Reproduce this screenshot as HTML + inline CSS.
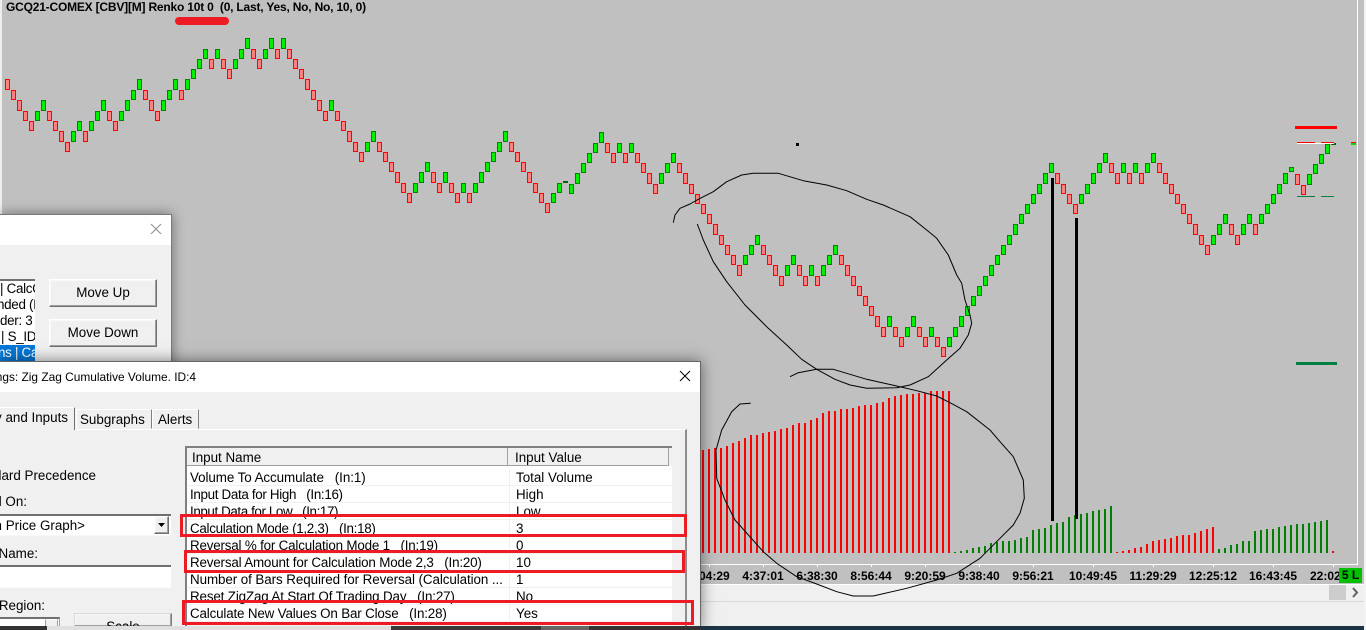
<!DOCTYPE html>
<html lang="en"><head><meta charset="utf-8"><title>Renko chart</title>
<style>
html,body{margin:0;padding:0;width:1366px;height:630px;overflow:hidden;background:#c0c0c0}
body{position:relative;font-family:"Liberation Sans",Arial,sans-serif;font-size:13.4px;color:#000}
div,span{position:absolute;white-space:pre;box-sizing:border-box}
svg{position:absolute;left:0;top:0}
.ax{font-weight:bold;font-size:12px;top:569px;width:70px;text-align:center;line-height:14px}
.tick{top:564px;width:1px;height:3px;background:#fff}
.btn{background:#f0f0f0;border:1px solid;border-color:#fff #707070 #707070 #fff;box-shadow:inset -1px -1px 0 #a0a0a0,inset 1px 1px 0 #f8f8f8;text-align:center}
.t{line-height:16px;height:16px;overflow:hidden}
.e{left:0;direction:rtl;text-align:right}
.r{left:187px;width:485px;height:17px;background:#fff;border-bottom:1px solid #f0f0f0;overflow:hidden}
.r span{top:1px;line-height:16px}
.r .a{left:3px}.r .b{left:329px}
.r i{position:absolute;left:322px;top:0;width:1px;height:17px;background:#f0f0f0}
.lr{left:0;width:35px;height:16px;line-height:16px;overflow:hidden;letter-spacing:-.3px}
</style></head><body>

<div style="left:0;top:0;width:2px;height:630px;background:#eee"></div>
<div style="left:6px;top:0;font-weight:bold;font-size:12px;line-height:15px;letter-spacing:-.2px">GCQ21-COMEX [CBV][M] Renko 10t 0  (0, Last, Yes, No, No, 10, 0)</div>
<div style="left:175px;top:17px;width:54px;height:8px;border-radius:4px;background:#ed1c24"></div>

<div style="left:2px;top:564px;width:1355px;height:1px;background:#fff"></div>
<div style="left:1357px;top:0;width:1px;height:565px;background:#fff"></div>
<div class="tick" style="left:709px"></div><div class="tick" style="left:763px"></div><div class="tick" style="left:817px"></div><div class="tick" style="left:871px"></div><div class="tick" style="left:925px"></div><div class="tick" style="left:979px"></div><div class="tick" style="left:1033px"></div><div class="tick" style="left:1093px"></div><div class="tick" style="left:1153px"></div><div class="tick" style="left:1213px"></div><div class="tick" style="left:1273px"></div><div class="tick" style="left:1333px"></div>
<div class="ax" style="left:674px">2:04:29</div>
<div class="ax" style="left:728px">4:37:01</div>
<div class="ax" style="left:782px">6:38:30</div>
<div class="ax" style="left:836px">8:56:44</div>
<div class="ax" style="left:890px">9:20:59</div>
<div class="ax" style="left:944px">9:38:40</div>
<div class="ax" style="left:998px">9:56:21</div>
<div class="ax" style="left:1058px">10:49:45</div>
<div class="ax" style="left:1118px">11:29:29</div>
<div class="ax" style="left:1178px">12:25:12</div>
<div class="ax" style="left:1238px">16:43:45</div>
<div class="ax" style="left:1298px;width:41px;overflow:hidden;text-align:left;text-indent:12px">22:02:15</div>
<div style="left:1339px;top:568px;width:23px;height:15px;background:#00c000;font-weight:bold;font-size:12px;line-height:15px;text-align:center">5 L</div>

<div style="left:0;top:584px;width:1364px;height:42px;background:#f0f0f0;border-top:1px solid #fff"></div>
<div style="left:0;top:601px;width:1364px;height:1px;background:#d8d8d8"></div>
<div style="left:1329px;top:585px;width:17px;height:15px;background:#cdcdcd"></div>
<div style="left:1364px;top:0;width:2px;height:630px;background:#f4f4f4"></div>

<svg width="1366" height="630" viewBox="0 0 1366 630">
<g transform="translate(.5 .5)" stroke-width="1">
<path fill="#ff8080" stroke="#f00" d="M5 79v10h4v-10zM11 90v9h4v-9zM17 100v10h4v-10zM23 111v9h4v-9zM29 121v9h4v-9zM47 111v9h4v-9zM53 121v9h4v-9zM59 131v10h4v-10zM65 142v9h4v-9zM83 131v10h4v-10zM107 111v9h4v-9zM113 121v9h4v-9zM143 90v9h4v-9zM149 100v10h4v-10zM155 111v9h4v-9zM179 90v9h4v-9zM209 59v9h4v-9zM221 59v9h4v-9zM227 69v9h4v-9zM251 49v9h4v-9zM257 59v9h4v-9zM275 49v9h4v-9zM287 49v9h4v-9zM293 59v9h4v-9zM299 69v9h4v-9zM305 79v10h4v-10zM311 90v9h4v-9zM317 100v10h4v-10zM323 111v9h4v-9zM335 111v9h4v-9zM341 121v9h4v-9zM347 131v10h4v-10zM353 142v9h4v-9zM359 152v9h4v-9zM377 142v9h4v-9zM383 152v9h4v-9zM389 162v9h4v-9zM395 172v10h4v-10zM401 183v9h4v-9zM407 193v9h4v-9zM431 172v10h4v-10zM437 183v9h4v-9zM449 183v9h4v-9zM455 193v9h4v-9zM467 193v9h4v-9zM509 142v9h4v-9zM515 152v9h4v-9zM521 162v9h4v-9zM527 172v10h4v-10zM533 183v9h4v-9zM539 193v9h4v-9zM545 203v9h4v-9zM605 143v9h4v-9zM611 153v9h4v-9zM623 153v9h4v-9zM635 153v9h4v-9zM641 163v9h4v-9zM647 173v10h4v-10zM653 184v9h4v-9zM677 163v9h4v-9zM683 173v10h4v-10zM689 184v9h4v-9zM695 194v9h4v-9zM701 204v9h4v-9zM707 214v9h4v-9zM713 224v10h4v-10zM719 235v9h4v-9zM725 245v9h4v-9zM731 255v9h4v-9zM737 265v10h4v-10zM761 245v9h4v-9zM767 255v9h4v-9zM773 265v10h4v-10zM779 276v9h4v-9zM797 265v10h4v-10zM803 276v9h4v-9zM815 276v9h4v-9zM839 255v9h4v-9zM845 265v10h4v-10zM851 276v9h4v-9zM857 286v9h4v-9zM863 296v9h4v-9zM869 306v9h4v-9zM875 316v10h4v-10zM881 327v9h4v-9zM893 327v9h4v-9zM899 337v9h4v-9zM917 327v9h4v-9zM923 337v9h4v-9zM935 337v9h4v-9zM941 347v9h4v-9zM1055 173v10h4v-10zM1061 184v9h4v-9zM1067 194v9h4v-9zM1073 204v9h4v-9zM1109 163v9h4v-9zM1115 173v10h4v-10zM1127 173v10h4v-10zM1139 173v10h4v-10zM1157 163v9h4v-9zM1163 173v10h4v-10zM1169 184v9h4v-9zM1175 194v9h4v-9zM1181 204v9h4v-9zM1187 214v9h4v-9zM1193 224v10h4v-10zM1199 235v9h4v-9zM1205 245v9h4v-9zM1229 224v10h4v-10zM1235 235v9h4v-9zM1253 224v10h4v-10zM1295 174v10h4v-10zM1301 185v9h4v-9z"/>
<path fill="#00f000" stroke="#008000" d="M35 111v9h4v-9zM41 100v10h4v-10zM71 131v10h4v-10zM77 121v9h4v-9zM89 121v9h4v-9zM95 111v9h4v-9zM101 100v10h4v-10zM119 111v9h4v-9zM125 100v10h4v-10zM131 90v9h4v-9zM137 79v10h4v-10zM161 100v10h4v-10zM167 90v9h4v-9zM173 79v10h4v-10zM185 79v10h4v-10zM191 69v9h4v-9zM197 59v9h4v-9zM203 49v9h4v-9zM215 49v9h4v-9zM233 59v9h4v-9zM239 49v9h4v-9zM245 38v10h4v-10zM263 49v9h4v-9zM269 38v10h4v-10zM281 38v10h4v-10zM329 100v10h4v-10zM365 142v9h4v-9zM371 131v10h4v-10zM413 183v9h4v-9zM419 172v10h4v-10zM425 162v9h4v-9zM443 172v10h4v-10zM461 183v9h4v-9zM473 183v9h4v-9zM479 172v10h4v-10zM485 162v9h4v-9zM491 152v9h4v-9zM497 142v9h4v-9zM503 131v10h4v-10zM551 193v9h4v-9zM557 183v9h4v-9zM569 184v9h4v-9zM575 173v10h4v-10zM581 163v9h4v-9zM587 153v9h4v-9zM593 143v9h4v-9zM599 132v10h4v-10zM617 143v9h4v-9zM629 143v9h4v-9zM659 173v10h4v-10zM665 163v9h4v-9zM671 153v9h4v-9zM743 255v9h4v-9zM749 245v9h4v-9zM755 235v9h4v-9zM785 265v10h4v-10zM791 255v9h4v-9zM809 265v10h4v-10zM821 265v10h4v-10zM827 255v9h4v-9zM833 245v9h4v-9zM887 316v10h4v-10zM905 327v9h4v-9zM911 316v10h4v-10zM929 327v9h4v-9zM947 337v9h4v-9zM953 327v9h4v-9zM959 316v10h4v-10zM965 306v9h4v-9zM971 296v9h4v-9zM977 286v9h4v-9zM983 276v9h4v-9zM989 265v10h4v-10zM995 255v9h4v-9zM1001 245v9h4v-9zM1007 235v9h4v-9zM1013 224v10h4v-10zM1019 214v9h4v-9zM1025 204v9h4v-9zM1031 194v9h4v-9zM1037 184v9h4v-9zM1043 173v10h4v-10zM1049 163v9h4v-9zM1079 194v9h4v-9zM1085 184v9h4v-9zM1091 173v10h4v-10zM1097 163v9h4v-9zM1103 153v9h4v-9zM1121 163v9h4v-9zM1133 163v9h4v-9zM1145 163v9h4v-9zM1151 153v9h4v-9zM1211 235v9h4v-9zM1217 224v10h4v-10zM1223 214v9h4v-9zM1241 224v10h4v-10zM1247 214v9h4v-9zM1259 214v9h4v-9zM1265 204v9h4v-9zM1271 194v9h4v-9zM1277 184v9h4v-9zM1283 173v10h4v-10zM1289 167v4h4v-4zM1307 174v10h4v-10zM1313 164v9h4v-9zM1319 154v9h4v-9zM1325 144v9h4v-9z"/>
</g>
<rect x="563" y="181" width="5" height="2" fill="#006400"/>
<rect x="1331" y="143" width="5" height="2" fill="#006400"/>
<rect x="1295" y="126" width="42" height="3" fill="#f00"/>
<rect x="1297" y="142" width="18" height="1" fill="#f00"/>
<rect x="1321" y="142" width="13" height="1" fill="#f00"/>
<rect x="1297" y="143" width="37" height="1" fill="#fff"/>
<rect x="1351" y="142" width="5" height="1" fill="#f00"/>
<rect x="1351" y="143" width="5" height="2" fill="#00e000"/>
<rect x="1297" y="196" width="18" height="1" fill="#008040"/>
<rect x="1321" y="196" width="13" height="1" fill="#008040"/>
<rect x="1296" y="362" width="41" height="3" fill="#008040"/>
<rect x="796" y="143" width="3" height="3" fill="#000"/>
<path stroke="#f00" stroke-width="2" fill="none" d="M703 450V553M709 449V553M715 448V553M721 448V553M727 446V553M733 443V553M739 441V553M745 438V553M751 435V553M757 435V553M763 433V553M769 432V553M775 431V553M781 429V553M787 428V553M793 425V553M799 423V553M805 423V553M811 420V553M817 418V553M823 413V553M829 411V553M835 411V553M841 409V553M847 409V553M853 408V553M859 406V553M865 405V553M871 405V553M877 403V553M883 402V553M889 398V553M895 396V553M901 395V553M907 394V553M913 394V553M919 393V553M925 393V553M931 391V553M937 391V553M943 391V553M949 391V553M1117 552V553M1123 551V553M1129 550V553M1135 548V553M1141 547V553M1147 544V553M1153 541V553M1159 540V553M1165 539V553M1171 538V553M1177 536V553M1183 535V553M1189 535V553M1195 533V553M1201 531V553M1207 529V553M1213 527V553M1333 551V553"/>
<path stroke="#008000" stroke-width="2" fill="none" d="M955 552V553M961 551V553M967 550V553M973 548V553M979 547V553M985 546V553M991 543V553M997 542V553M1003 541V553M1009 541V553M1015 540V553M1021 538V553M1027 537V553M1033 530V553M1039 529V553M1045 528V553M1051 525V553M1057 523V553M1063 522V553M1069 517V553M1075 515V553M1081 514V553M1087 513V553M1093 511V553M1099 510V553M1105 509V553M1111 506V553M1219 549V553M1225 548V553M1231 545V553M1237 544V553M1243 541V553M1249 541V553M1255 531V553M1261 530V553M1267 529V553M1273 529V553M1279 527V553M1285 526V553M1291 525V553M1297 524V553M1303 524V553M1309 523V553M1315 522V553M1321 521V553M1327 520V553"/>
<rect x="1051" y="178" width="3" height="343" fill="#000"/>
<rect x="1075" y="218" width="3" height="301" fill="#000"/>
<polyline fill="none" stroke="#000" stroke-width="1" stroke-linejoin="round" points="673.3,222.7 675,215 680,208.3 690,204 698.3,199.3 713.3,191.7 726.7,181.7 741.7,175 753.3,173.3 778.3,173.3 803.3,180.7 826.7,185 846.7,190.7 866.7,199.3 883.3,205 910,216.7 926.7,230 936.7,238.3 948.3,255 956.7,275 961.7,283.3 965,300 970,315 971.7,323.3 968.3,335 960,348.3 946.7,360 928.3,376.7 910,385 896.7,387.7 866.7,388.3 850,385 835,379.3 816.7,369.3 801.7,359.3 786.7,345 768.3,328.3 745,305 726.7,281.7 713.3,261.7 703.3,240 697.3,224"/>
<polyline fill="none" stroke="#000" stroke-width="1" stroke-linejoin="round" points="790,376.7 798.3,372.7 816.7,369.3 833.3,369.3 866.7,379.3 896.7,386 916.7,390.7 936.7,396 950,402.7 966.7,411.7 990,430 1000,441.7 1013.3,456.7 1023.3,480 1024.3,498.3 1020,513.3 1013.3,525 1000,538.3 980,558.3 956.7,573.3 936.7,580 906.7,588.3 873.3,596 853.3,596 836.7,591.7 816.7,584 796.7,576.7 776.7,563.3 763.3,551.7 735,520 725,500 716.7,478.3 716,450 721.7,430 731.7,411.7 740,404 750.7,403.3"/>
<path d="M1353 588l4 4.500-4 4.500" fill="none" stroke="#606060" stroke-width="2"/>
</svg>

<!-- back dialog -->
<div style="left:0;top:214px;width:172px;height:160px;background:#f0f0f0;border:1px solid #7a7a7a;border-left:0;box-shadow:0 0 12px rgba(0,0,0,.45)"></div>
<div style="left:0;top:215px;width:171px;height:30px;background:#fff"></div>
<svg width="1366" height="630" viewBox="0 0 1366 630"><path d="M151 224l10 10M161 224l-10 10" stroke="#8c8c8c" stroke-width="1" fill="none"/></svg>
<div style="left:0;top:279px;width:35px;height:82px;background:#fff;border-top:2px solid #707070;overflow:hidden"></div>
<div class="lr" style="top:281px">| CalcCC</div>
<div class="lr" style="top:297px;text-indent:-3px">nded (I</div>
<div class="lr" style="top:313px">der: 3</div>
<div class="lr" style="top:329px;text-indent:1px">| S_ID</div>
<div class="lr" style="top:345px;background:#0078d7;color:#fff;text-indent:-2px">ns | Ca</div>
<div class="btn" style="left:49px;top:279px;width:108px;height:28px;line-height:26px">Move Up</div>
<div class="btn" style="left:49px;top:319px;width:108px;height:28px;line-height:26px">Move Down</div>

<!-- front dialog -->
<div style="left:0;top:361px;width:701px;height:269px;background:#f0f0f0;border:1px solid #666;border-left:0;border-bottom:0;box-shadow:0 0 14px rgba(0,0,0,.5)"></div>
<div style="left:0;top:362px;width:700px;height:30px;background:#fff"></div>
<div class="t e" style="top:369px;width:196px;font-size:11.9px">Study Settings: Zig Zag Cumulative Volume. ID:4&lrm;</div>
<svg width="1366" height="630" viewBox="0 0 1366 630"><path d="M680 371l10 10M690 371l-10 10" stroke="#000" stroke-width="1" fill="none"/></svg>

<!-- tabs -->
<div style="left:0;top:429px;width:687px;height:201px;border-top:1px solid #fff;border-right:2px solid #8c8c8c"></div>
<div style="left:0;top:407px;width:75px;height:23px;background:#f0f0f0;border-top:1px solid #fff;border-right:1px solid #707070"></div>
<div style="left:76px;top:409px;width:76px;height:20px;background:#f0f0f0;border:1px solid;border-color:#fff #808080 transparent #fff"></div>
<div style="left:152px;top:409px;width:47px;height:20px;background:#f0f0f0;border:1px solid;border-color:#fff #808080 transparent #fff"></div>
<div class="t e" style="top:410px;width:68px">Study and Inputs</div>
<div class="t" style="left:80px;top:412px">Subgraphs</div>
<div class="t" style="left:158px;top:412px">Alerts</div>

<!-- left form -->
<div class="t e" style="top:468px;width:96px">Standard Precedence</div>
<div class="t e" style="top:494px;width:27px">Based On:&lrm;</div>
<div style="left:0;top:514px;width:171px;height:22px;background:#fff;border-top:2px solid #707070;border-bottom:1px solid #f8f8f8;overflow:hidden"></div>
<div class="t e" style="top:518px;width:85px">&lrm;&lt;Main Price Graph&gt;&lrm;</div>
<div class="btn" style="left:154px;top:516px;width:15px;height:18px"></div>
<svg width="1366" height="630" viewBox="0 0 1366 630"><path d="M158 523h7l-3.500 4z" fill="#000"/></svg>
<div class="t e" style="top:546px;width:38px">Study Name:&lrm;</div>
<div style="left:0;top:565px;width:171px;height:23px;background:#fff;border-top:2px solid #707070;border-bottom:1px solid #fafafa"></div>
<div class="t e" style="top:598px;width:45px">Chart Region:&lrm;</div>
<div style="left:0;top:617px;width:60px;height:10px;background:#fff;border-top:2px solid #707070;border-right:1px solid #a0a0a0"></div>
<div style="left:45px;top:619px;width:13px;height:8px;background:#f0f0f0;border:1px solid;border-color:#fff #a0a0a0"></div>
<div class="btn" style="left:74px;top:613px;width:98px;height:13px;line-height:25px;overflow:hidden;border-bottom:0;border-color:#d8d8d8 #808080 #808080 #d8d8d8">Scale</div>

<!-- table -->
<div style="left:185px;top:446px;width:487px;height:184px;background:#f0f0f0;border-top:2px solid #808080;border-left:2px solid #808080"></div>
<div style="left:187px;top:448px;width:482px;height:18px;background:#f0f0f0;border-bottom:1px solid #a0a0a0;border-right:1px solid #a0a0a0"></div>
<div style="left:507px;top:448px;width:1px;height:17px;background:#a0a0a0"></div>
<div class="t" style="left:192px;top:450px">Input Name</div>
<div class="t" style="left:515px;top:450px">Input Value</div>
<div style="left:187px;top:466px;width:485px;height:3px;background:#fff"></div>
<div class="r" style="top:469px"><i></i><span class="a" style="letter-spacing:-.07px">Volume To Accumulate   (In:1)</span><span class="b">Total Volume</span></div>
<div class="r" style="top:486px"><i></i><span class="a" style="letter-spacing:-.33px">Input Data for High   (In:16)</span><span class="b">High</span></div>
<div class="r" style="top:503px"><i></i><span class="a" style="letter-spacing:-.4px">Input Data for Low   (In:17)</span><span class="b">Low</span></div>
<div class="r" style="top:520px"><i></i><span class="a" style="letter-spacing:-.3px">Calculation Mode (1,2,3)   (In:18)</span><span class="b">3</span></div>
<div class="r" style="top:537px"><i></i><span class="a" style="letter-spacing:-.19px">Reversal % for Calculation Mode 1   (In:19)</span><span class="b">0</span></div>
<div class="r" style="top:554px"><i></i><span class="a" style="letter-spacing:-.18px">Reversal Amount for Calculation Mode 2,3   (In:20)</span><span class="b">10</span></div>
<div class="r" style="top:571px"><i></i><span class="a" style="letter-spacing:-.08px">Number of Bars Required for Reversal (Calculation ...</span><span class="b">1</span></div>
<div class="r" style="top:588px"><i></i><span class="a" style="letter-spacing:-.15px">Reset ZigZag At Start Of Trading Day   (In:27)</span><span class="b">No</span></div>
<div class="r" style="top:605px"><i></i><span class="a" style="letter-spacing:-.17px">Calculate New Values On Bar Close   (In:28)</span><span class="b">Yes</span></div>

<!-- red annotation boxes -->
<div style="left:180px;top:514px;width:507px;height:23px;border:3px solid #ed1c24"></div>
<div style="left:184px;top:550px;width:501px;height:23px;border:3px solid #ed1c24"></div>
<div style="left:182px;top:600px;width:512px;height:25px;border:3px solid #ed1c24"></div>

<!-- taskbar strip -->
<div style="left:0;top:626px;width:47px;height:4px;background:#333"></div>
<div style="left:47px;top:626px;width:344px;height:4px;background:#e0e0e0"></div>
<div style="left:391px;top:626px;width:150px;height:4px;background:#3a3a3a"></div>
<div style="left:541px;top:626px;width:48px;height:4px;background:#666"></div>
<div style="left:589px;top:626px;width:111px;height:4px;background:#333"></div>
<div style="left:700px;top:626px;width:664px;height:4px;background:#1c3344"></div>
</body></html>
